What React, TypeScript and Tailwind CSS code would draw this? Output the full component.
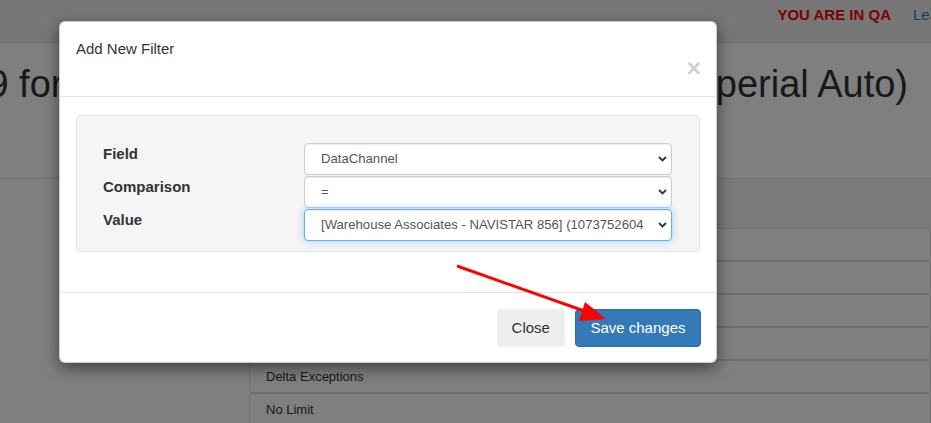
import React from "react";

const rows = [
  "Speed Exceptions",
  "Idle Exceptions",
  "Harsh Braking",
  "Geofence Alerts",
  "Delta Exceptions",
  "No Limit",
];

function Chevron() {
  return (
    <svg width="9" height="6" viewBox="0 0 9 6" className="shrink-0">
      <path d="M1 1l3.5 3.5L8 1" fill="none" stroke="#333" strokeWidth="1.8" />
    </svg>
  );
}

function FakeSelect({ value, focused }: { value: string; focused?: boolean }) {
  return (
    <div
      className={
        focused
          ? "flex h-[32px] min-w-0 items-center gap-[15px] rounded-[4px] border border-[#66afe9] bg-white pl-[16px] pr-[4px] shadow-[inset_0_1px_1px_rgba(0,0,0,0.075),0_0_8px_rgba(102,175,233,0.6)]"
          : "flex h-[32px] min-w-0 items-center gap-[15px] rounded-[4px] border border-[#ccc] bg-white pl-[16px] pr-[4px] shadow-[inset_0_1px_1px_rgba(0,0,0,0.075)]"
      }
    >
      <span className="min-w-0 flex-1 overflow-hidden whitespace-nowrap text-[13.15px] text-[#555]">
        {value}
      </span>
      <Chevron />
    </div>
  );
}

export default function App() {
  return (
    <div
      className="relative h-[423px] w-[931px] overflow-hidden bg-white text-[#333]"
      style={{ fontFamily: '"Liberation Sans", Arial, sans-serif' }}
    >
      {/* PAGE BEHIND THE MODAL */}
      <nav className="flex h-[43px] border-b border-[#ddd] bg-[#eee] pt-[5px]">
        <div className="flex-1" />
        <span className="shrink-0 text-[15px] leading-[20px] font-bold text-[#ff0000]">
          YOU ARE IN QA
        </span>
        <span className="ml-[22px] w-[18px] shrink-0 overflow-hidden whitespace-nowrap text-[15px] leading-[20px] text-[#337ab7]">
          Leads
        </span>
      </nav>

      <h1 className="mt-[21px] flex justify-between whitespace-nowrap pr-[23px] text-[38px] leading-[1.1] text-[#333]">
        <span className="-ml-[76px]">1079 for Warehouse</span>
        <span>(Imperial Auto)</span>
      </h1>

      <div className="mt-[72px] flex border-t border-[#ddd]">
        <div className="w-[249px] shrink-0" />
        <div className="flex flex-1 flex-col">
          <div className="h-[49px] bg-[#f5f5f5]" />
          {rows.map((r) => (
            <div
              key={r}
              className="flex h-[33px] items-center rounded-[3px] border border-[#ddd] pl-[16px] text-[13px] text-[#333]"
            >
              {r}
            </div>
          ))}
        </div>
      </div>

      {/* BACKDROP + MODAL */}
      <div className="absolute inset-0 bg-black/50">
        <div className="ml-[59px] mt-[21px] w-[658px] rounded-[6px] border border-black/20 bg-white shadow-[0_5px_15px_rgba(0,0,0,0.5)]">
          <div className="border-b border-[#e5e5e5] px-[16px] pb-[16px] pt-[16px]">
            <h4 className="text-[15px] leading-[21px] text-[#333]">Add New Filter</h4>
            <div className="flex justify-end">
              <span className="-mr-[1px] -mt-[3px] text-[25px] leading-[24px] font-bold text-black/20">
                ×
              </span>
            </div>
          </div>

          <div className="px-[16px] pb-[40px] pt-[18px]">
            <div className="rounded-[4px] border border-[#e3e3e3] bg-[#f5f5f5] pb-[10px] pl-[26px] pr-[27px] pt-[27px]">
              <div className="grid grid-cols-[201px_minmax(0,1fr)] gap-y-[1px]">
                <label className="text-[15px] leading-[21px] font-bold">Field</label>
                <FakeSelect value="DataChannel" />
                <label className="text-[15px] leading-[21px] font-bold">Comparison</label>
                <FakeSelect value="=" />
                <label className="text-[15px] leading-[21px] font-bold">Value</label>
                <FakeSelect
                  value="[Warehouse Associates - NAVISTAR 856] (1073752604)"
                  focused
                />
              </div>
            </div>
          </div>

          <div className="flex justify-end gap-[10px] border-t border-[#e5e5e5] px-[15px] pb-[15px] pt-[16px]">
            <button className="h-[38px] rounded-[4px] border border-[#eee] bg-[#eee] px-[14px] text-[15px] text-[#333]">
              Close
            </button>
            <button className="h-[38px] rounded-[4px] border border-[#2e6da4] bg-[#337ab7] px-[14.5px] text-[15px] text-white">
              Save changes
            </button>
          </div>
        </div>
      </div>

      {/* ANNOTATION ARROW */}
      <svg
        className="pointer-events-none absolute inset-0"
        width="931"
        height="423"
        viewBox="0 0 931 423"
      >
        <line x1="457" y1="266" x2="590" y2="313" stroke="#ff0000" strokeWidth="3" />
        <polygon points="606,319 585,302 579,321" fill="#ff0000" />
      </svg>
    </div>
  );
}
